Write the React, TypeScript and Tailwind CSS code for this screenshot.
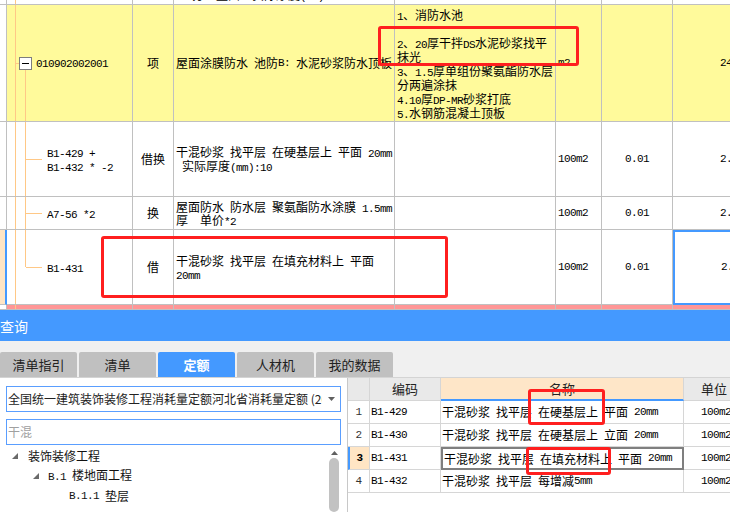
import React from "react";

const CJK = /[\u2E80-\u9FFF\uFF00-\uFFEF]/;

// SimSun-like look: CJK at 12px, latin runs half-width (~6px)
function Mix({ text }: { text: string }) {
  const parts = text.split(/([\u2E80-\u9FFF\uFF00-\uFFEF]+)/).filter(Boolean);
  return (
    <>
      {parts.map((p, i) =>
        CJK.test(p) ? (
          <span key={i}>{p}</span>
        ) : (
          <span
            key={i}
            className="font-['Liberation_Mono',monospace] text-[11px] tracking-[-0.6px] whitespace-pre"
          >
            {p}
          </span>
        )
      )}
    </>
  );
}

const G = "border-r border-b border-[#c0c0c0]";
const ORANGE = "bg-[#ffc886]";

function VLine() {
  return <div className={`w-px self-stretch ${ORANGE}`} />;
}

function PassTree({ bg }: { bg: string }) {
  return (
    <div className={`${G} ${bg} flex`}>
      <div className="w-[8px]" />
      <VLine />
    </div>
  );
}

function ChildTree({ lines, last }: { lines: string[]; last?: boolean }) {
  return (
    <div className={`${G} bg-white flex`}>
      <div className="w-[8px]" />
      <VLine />
      <div className="w-[9px]" />
      {last ? (
        <div className="w-px flex flex-col">
          <div className={`flex-1 ${ORANGE}`} />
          <div className="flex-1" />
        </div>
      ) : (
        <VLine />
      )}
      <div className={`w-[16px] h-px self-center ${ORANGE}`} />
      <div className="ml-[5px] self-center leading-[14px]">
        {lines.map((l) => (
          <div key={l} className="h-[14px]">
            <Mix text={l} />
          </div>
        ))}
      </div>
    </div>
  );
}

const features = [
  "1、消防水池",
  " ",
  "2、20厚干拌DS水泥砂浆找平",
  "抹光",
  "3、1.5厚单组份聚氨酯防水层",
  "分两遍涂抹",
  "4.10厚DP-MR砂浆打底",
  "5.水钢筋混凝土顶板",
];

function TopTable() {
  return (
    <div className="grid grid-cols-[7px_126px_41px_221px_161px_46px_71px_90px] grid-rows-[5px_117px_75px_33px_75px_5px] w-[753px] h-[310px] text-[12px] text-black">
      {/* row 0 - clipped previous row */}
      <div className={`${G} bg-white`} />
      <PassTree bg="bg-white" />
      <div className={`${G} bg-white`} />
      <div className={`${G} bg-white overflow-hidden`}>
        <div className="-mt-[12px] pl-[18px] leading-[13px] whitespace-nowrap">
          <Mix text="分  壁面  实际厚度(mm):10" />
        </div>
      </div>
      <div className={`${G} bg-white`} />
      <div className={`${G} bg-white`} />
      <div className={`${G} bg-white`} />
      <div className={`${G} bg-white`} />

      {/* row 1 - yellow item */}
      <div className={`${G} bg-white`} />
      <div className={`${G} bg-[#fffa9b] flex`}>
        <div className="w-[8px]" />
        <VLine />
        <div className={`w-[3px] h-px self-center ${ORANGE}`} />
        <div className="w-[13px] flex flex-col">
          <div className="flex-1" />
          <div className="h-[13px] border border-[#7d7d7d] bg-white flex items-center justify-center">
            <div className="w-[7px] h-px bg-black" />
          </div>
          <div className="flex-1 flex justify-center">
            <div className={`w-px ${ORANGE}`} />
          </div>
        </div>
        <div className="ml-[4px] self-center leading-[14px]">
          <Mix text="010902002001" />
        </div>
      </div>
      <div className={`${G} bg-[#fffa9b] flex items-center justify-center`}>项</div>
      <div className={`${G} bg-[#fffa9b] flex items-center pl-[2px] whitespace-nowrap overflow-hidden`}>
        <Mix text="屋面涂膜防水 池防B: 水泥砂浆防水顶板" />
      </div>
      <div className={`${G} bg-[#fffa9b] pl-[2px] pt-[3px] leading-[14px] whitespace-nowrap overflow-hidden`}>
        {features.map((f, i) => (
          <div key={i} className="h-[14px]">
            <Mix text={f} />
          </div>
        ))}
      </div>
      <div className={`${G} bg-[#fffa9b] flex items-center pl-[2px]`}>
        <Mix text="m2" />
      </div>
      <div className={`${G} bg-[#fffa9b]`} />
      <div className={`${G} bg-[#fffa9b] flex items-center pl-[47px]`}>
        <Mix text="24" />
      </div>

      {/* row 2 */}
      <div className={`${G} bg-white`} />
      <ChildTree lines={["B1-429 +", "B1-432 * -2"]} />
      <div className={`${G} bg-white flex items-center justify-center`}>借换</div>
      <div className={`${G} bg-white flex flex-col justify-center pl-[2px] leading-[14px] whitespace-nowrap overflow-hidden`}>
        <div className="h-[14px]">
          <Mix text="干混砂浆 找平层 在硬基层上 平面 20mm" />
        </div>
        <div className="h-[14px]">
          <Mix text=" 实际厚度(mm):10" />
        </div>
      </div>
      <div className={`${G} bg-white`} />
      <div className={`${G} bg-white flex items-center pl-[2px]`}>
        <Mix text="100m2" />
      </div>
      <div className={`${G} bg-white flex items-center justify-center`}>
        <Mix text="0.01" />
      </div>
      <div className={`${G} bg-white flex items-center pl-[47px]`}>
        <Mix text="2." />
      </div>

      {/* row 3 */}
      <div className={`${G} bg-white`} />
      <ChildTree lines={["A7-56 *2"]} />
      <div className={`${G} bg-white flex items-center justify-center`}>换</div>
      <div className={`${G} bg-white flex flex-col justify-center pl-[2px] leading-[13px] whitespace-nowrap overflow-hidden`}>
        <div className="h-[13px]">
          <Mix text="屋面防水 防水层 聚氨酯防水涂膜 1.5mm" />
        </div>
        <div className="h-[13px]">
          <Mix text="厚  单价*2" />
        </div>
      </div>
      <div className={`${G} bg-white`} />
      <div className={`${G} bg-white flex items-center pl-[2px]`}>
        <Mix text="100m2" />
      </div>
      <div className={`${G} bg-white flex items-center justify-center`}>
        <Mix text="0.01" />
      </div>
      <div className={`${G} bg-white flex items-center pl-[47px]`}>
        <Mix text="2." />
      </div>

      {/* row 4 - current row */}
      <div className="border-b border-[#c0c0c0] border-r-2 border-r-[#4499ff] bg-[#ffe5c4]" />
      <ChildTree lines={["B1-431"]} last />
      <div className={`${G} bg-white flex items-center justify-center`}>借</div>
      <div className={`${G} bg-white flex flex-col justify-center pl-[2px] leading-[13px] whitespace-nowrap overflow-hidden`}>
        <div className="h-[13px]">
          <Mix text="干混砂浆 找平层 在填充材料上 平面" />
        </div>
        <div className="h-[13px]">
          <Mix text="20mm" />
        </div>
      </div>
      <div className={`${G} bg-white`} />
      <div className={`${G} bg-white flex items-center pl-[2px]`}>
        <Mix text="100m2" />
      </div>
      <div className={`${G} bg-white flex items-center justify-center`}>
        <Mix text="0.01" />
      </div>
      <div className="border-2 border-[#4499ff] bg-white flex items-center pl-[46px]">
        <Mix text="2." />
      </div>

      {/* row 5 - pink, clipped */}
      <div className={`${G} bg-white`} />
      <PassTree bg="bg-[#ff9696]" />
      <div className={`${G} bg-[#ff9696]`} />
      <div className={`${G} bg-[#ff9696]`} />
      <div className={`${G} bg-[#ff9696]`} />
      <div className={`${G} bg-[#ff9696]`} />
      <div className={`${G} bg-[#ff9696]`} />
      <div className={`${G} bg-[#ff9696]`} />
    </div>
  );
}

const tabs = ["清单指引", "清单", "定额", "人材机", "我的数据"];

function Tri({ up }: { up?: boolean }) {
  return (
    <svg width="7" height="4" viewBox="0 0 7 4">
      <polygon points={up ? "0,4 7,4 3.5,0" : "0,0 7,0 3.5,4"} fill="#606060" />
    </svg>
  );
}

function Corner() {
  return (
    <svg width="6" height="6" viewBox="0 0 6 6">
      <polygon points="6,0 6,6 0,6" fill="#6a6a6a" />
    </svg>
  );
}

const rows = [
  { n: "1", code: "B1-429", name: "干混砂浆 找平层 在硬基层上 平面 20mm" },
  { n: "2", code: "B1-430", name: "干混砂浆 找平层 在硬基层上 立面 20mm" },
  { n: "3", code: "B1-431", name: "干混砂浆 找平层 在填充材料上 平面 20mm" },
  { n: "4", code: "B1-432", name: "干混砂浆 找平层 每增减5mm" },
];

const RG = "border-r border-b border-[#d6d6d6]";

function QuotaTable() {
  return (
    <div className="grid grid-cols-[22px_71px_243px_90px] auto-rows-[23px] w-[426px] text-[12px]">
      <div className={`${RG} bg-[#e9e9e9]`} />
      <div className={`${RG} bg-[#e9e9e9] flex items-center justify-center text-[13px] text-[#222]`}>编码</div>
      <div className="border-r border-[#d6d6d6] border-b-2 border-b-[#4499ff] bg-[#fee6c8] flex items-center justify-center text-[13px] text-[#222]">
        名称
      </div>
      <div className={`${RG} bg-[#e9e9e9] flex items-center pl-[17px] text-[13px] text-[#222]`}>单位</div>
      {rows.map((r) => {
        const cur = r.n === "3";
        return (
          <React.Fragment key={r.n}>
            <div
              className={
                cur
                  ? "border-r border-b border-[#d6d6d6] border-l-2 border-l-[#4499ff] bg-[#ffe5c4] flex items-center justify-center font-bold"
                  : `${RG} bg-white flex items-center justify-center text-[#333]`
              }
            >
              <Mix text={r.n} />
            </div>
            <div className={`${RG} bg-white flex items-center pl-[1px]`}>
              <Mix text={r.code} />
            </div>
            <div
              className={
                cur
                  ? "border-2 border-[#7f7f7f] bg-white flex items-center pl-[1px] whitespace-nowrap"
                  : `${RG} bg-white flex items-center pl-[1px] whitespace-nowrap`
              }
            >
              <Mix text={r.name} />
            </div>
            <div className={`${RG} bg-white flex items-center pl-[17px]`}>
              <Mix text="100m2" />
            </div>
          </React.Fragment>
        );
      })}
    </div>
  );
}

export default function App() {
  return (
    <div className="relative w-[730px] h-[512px] overflow-hidden bg-white text-black font-['Noto_Sans_CJK_SC',sans-serif]">
      <TopTable />

      <div className="h-[31px] bg-[#4499ff] flex items-center text-white text-[14px] leading-none">查询</div>

      <div className="h-[37px] bg-[#f0f0f0] border-b border-[#d4d4d4] flex items-end gap-[2px]">
        {tabs.map((t) => (
          <div
            key={t}
            className={`w-[77px] h-[25px] rounded-t-[2px] flex items-center justify-center text-[13px] ${
              t === "定额" ? "bg-[#4499ff] text-white font-bold" : "bg-[#c0c0c0] text-[#222]"
            }`}
          >
            {t}
          </div>
        ))}
      </div>

      <div className="flex h-[134px]">
        <div className="w-[348px] border-r border-[#c8c8c8] px-[6px] pt-[8px] flex flex-col">
          <div className="h-[26px] border border-[#5a9eff] flex items-center pl-[1px] pr-[5px]">
            <div className="flex-1 overflow-hidden whitespace-nowrap text-[12px] text-[#222]">
              全国统一建筑装饰装修工程消耗量定额河北省消耗量定额 (2012)
            </div>
            <div className="ml-[6px]">
              <Tri />
            </div>
          </div>
          <div className="mt-[7px] h-[26px] border border-[#5a9eff] flex items-center pl-[1px] text-[12px] text-[#a0a0a0]">
            干混
          </div>
          <div className="mt-[1px] flex-1 flex min-h-0">
            <div className="flex-1 text-[12px] text-[#111]">
              <div className="h-[20px] flex items-center pl-[6px]">
                <Corner />
                <span className="ml-[10px]">装饰装修工程</span>
              </div>
              <div className="h-[20px] flex items-center pl-[27px]">
                <Corner />
                <span className="ml-[9px]">
                  <Mix text="B.1 楼地面工程" />
                </span>
              </div>
              <div className="h-[20px] flex items-center pl-[63px]">
                <Mix text="B.1.1 垫层" />
              </div>
              <div className="h-[20px] flex items-center pl-[99px] pt-[3px]">
                <Mix text="楼 层" />
              </div>
            </div>
            <div className="w-[12px] mr-[1px] flex flex-col items-center pt-[5px]">
              <Tri up />
              <div className="mt-[3px] w-[10px] flex-1 rounded-full bg-[#c2c2c2]" />
            </div>
          </div>
        </div>
        <div className="flex-1 overflow-hidden">
          <QuotaTable />
        </div>
      </div>

      {/* red annotation boxes */}
      <div className="absolute left-[378px] top-[26px] w-[201px] h-[40px] border-[3px] border-[#ff1f1f] rounded-[3px]" />
      <div className="absolute left-[101px] top-[236px] w-[347px] h-[62px] border-[3px] border-[#ff1f1f] rounded-[3px]" />
      <div className="absolute left-[528px] top-[389px] w-[77px] h-[36px] border-[3px] border-[#ff1f1f] rounded-[3px]" />
      <div className="absolute left-[526px] top-[447px] w-[85px] h-[28px] border-[3px] border-[#ff1f1f] rounded-[3px]" />
    </div>
  );
}
